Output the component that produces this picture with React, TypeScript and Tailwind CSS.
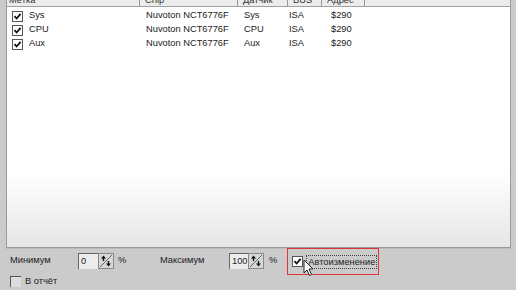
import React from 'react'

const rows = [
  { label: 'Sys', chip: 'Nuvoton NCT6776F', sensor: 'Sys', bus: 'ISA', addr: '$290' },
  { label: 'CPU', chip: 'Nuvoton NCT6776F', sensor: 'CPU', bus: 'ISA', addr: '$290' },
  { label: 'Aux', chip: 'Nuvoton NCT6776F', sensor: 'Aux', bus: 'ISA', addr: '$290' },
]

function Check({ checked }: { checked: boolean }) {
  return (
    <div className="w-[11px] h-[11px] border border-[#555] bg-white flex items-center justify-center shrink-0">
      {checked && (
        <svg width="9" height="9" viewBox="0 0 9 9">
          <path d="M1.5 4.2 L3.6 6.5 L7.6 1.8" stroke="#111" strokeWidth="1.8" fill="none" />
        </svg>
      )}
    </div>
  )
}

function Spin() {
  return (
    <div className="w-[16px] h-[16px] border border-[#888] bg-[#d8d8d8] shrink-0">
      <svg width="14" height="14" viewBox="0 0 14 14">
        <path d="M1 13 L13 1" stroke="#666" strokeWidth="1" />
        <path d="M4.5 1.5 L2 4.5 H3.8 V7 H5.2 V4.5 H7 Z" fill="#111" />
        <path d="M9.5 12.5 L12 9.5 H10.2 V7 H8.8 V9.5 H7 Z" fill="#111" />
      </svg>
    </div>
  )
}

function NumBox({ value, w }: { value: string; w: string }) {
  return (
    <div className={`${w} h-[16px] bg-[#ececec] border-t border-l border-[#666] border-r-[#ddd] border-b-[#ddd] flex items-center pl-[2px] text-[#222] overflow-hidden`}>
      {value}
    </div>
  )
}

export default function App() {
  return (
    <div
      className="w-[516px] h-[290px] bg-[#cbcbcb] overflow-hidden flex flex-col text-[9.3px] text-[#222] whitespace-nowrap"
      style={{ fontFamily: '"Liberation Sans", Arial, sans-serif' }}
    >
      <div className="ml-[6px] mr-[5px] h-[248px] shrink-0 border-l border-r border-b border-[#9a9a9a] bg-gradient-to-b from-white from-70% to-[#e6e6e6] flex flex-col shadow-[0_1px_0_#bbb]">
        <div className="-mt-[8px] h-[15px] flex bg-[#ececec] border-b border-[#a0a0a0] text-[#333] leading-[11px]">
          <div className="w-[133px] border-r border-[#999] pl-[2px] flex items-end">Метка</div>
          <div className="w-[98px] border-r border-[#999] pl-[5px] flex items-end">Chip</div>
          <div className="w-[50px] border-r border-[#999] pl-[5px] flex items-end">Датчик</div>
          <div className="w-[34px] border-r border-[#999] pl-[5px] flex items-end">BUS</div>
          <div className="w-[43px] border-r border-[#999] pl-[5px] flex items-end">Адрес</div>
          <div className="flex-1" />
        </div>
        <div className="pt-[2px]">
          {rows.map((r) => (
            <div key={r.label} className="h-[14px] flex items-center">
              <div className="w-[133px] flex items-center pl-[5px] gap-[6px]">
                <Check checked />
                <span>{r.label}</span>
              </div>
              <div className="w-[98px] pl-[6px]">{r.chip}</div>
              <div className="w-[50px] pl-[6px]">{r.sensor}</div>
              <div className="w-[36px] pl-[1px]">{r.bus}</div>
              <div className="pl-[7px]">{r.addr}</div>
            </div>
          ))}
        </div>
      </div>

      <div className="flex items-center pl-[10px] mt-[5px] h-[16px]">
        <span className="w-[68px]">Минимум</span>
        <NumBox value="0" w="w-[20px]" />
        <Spin />
        <span className="ml-[4px] w-[42px]">%</span>
        <span className="w-[69px]">Максимум</span>
        <NumBox value="100" w="w-[19px]" />
        <Spin />
        <span className="ml-[5px]">%</span>
        <div className="relative ml-[10px] h-[27px] w-[92px] border-[1.5px] border-[#e0353a] flex items-center pl-[4px] gap-[3px] mt-[1px]">
          <Check checked />
          <span className="border border-dotted border-[#444] px-[1px] leading-[12px]">Автоизменение</span>
          <svg className="absolute left-[15px] top-[10px]" width="12" height="18" viewBox="0 0 12 18">
            <path d="M1 1 L1 14 L4 11 L6.5 16.5 L8.5 15.5 L6 10 L10 10 Z" fill="white" stroke="#222" strokeWidth="1" strokeLinejoin="round" />
          </svg>
        </div>
      </div>

      <div className="flex items-center pl-[10px] mt-[6px] gap-[4px]">
        <div className="w-[11px] h-[11px] border-l border-t border-[#555] bg-[#ddd]" />
        <span>В отчёт</span>
      </div>
    </div>
  )
}
